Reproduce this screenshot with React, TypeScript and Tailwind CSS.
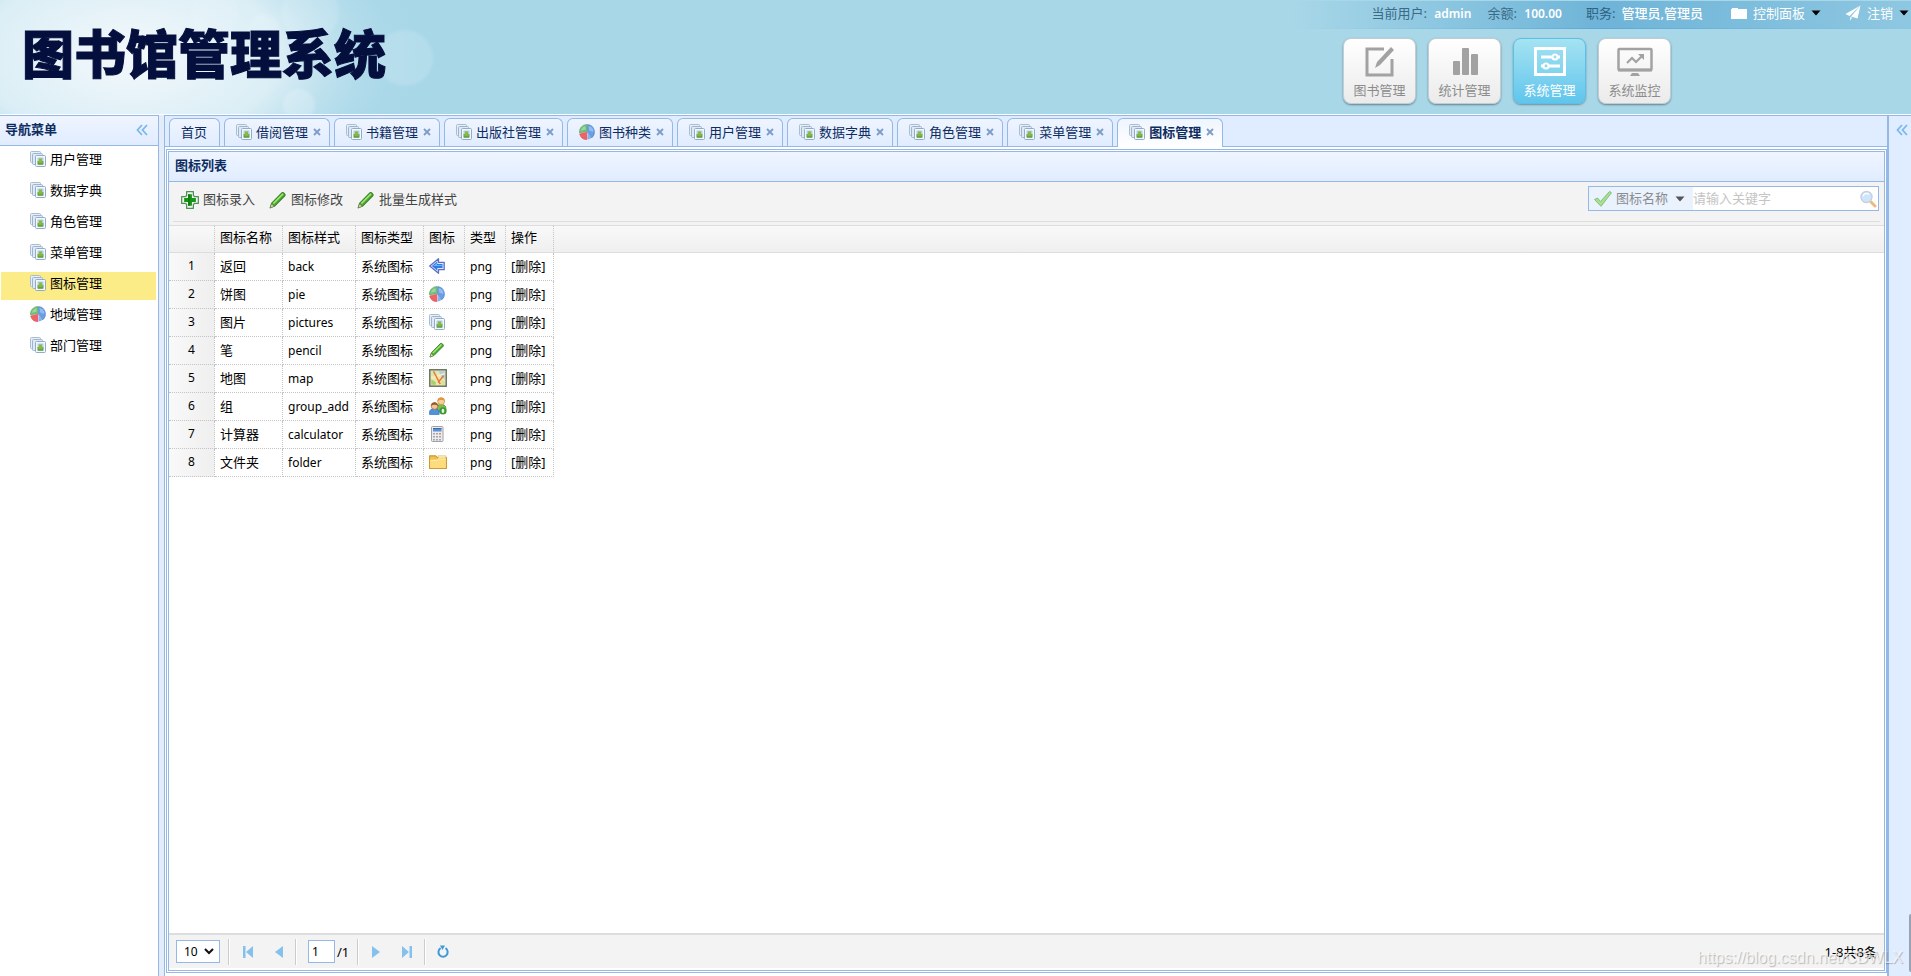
import React, { useState } from 'react';

type IconName = 'pictures' | 'pie' | 'back' | 'pencil' | 'map' | 'group' | 'calculator' | 'folder' | 'add';

const Icon = ({ name, size = 16 }: { name: IconName; size?: number }) => {
  const drawings: Record<IconName, React.ReactNode> = {
    pictures: (
      <>
        <rect x="0.5" y="0.5" width="10" height="11" rx="1" fill="#e6eef6" stroke="#a9bdd4" />
        <rect x="2.5" y="2.5" width="10" height="11" rx="1" fill="#dfe9f3" stroke="#9fb5cf" />
        <rect x="5.5" y="4.5" width="10" height="11" rx="1" fill="#f4f7fb" stroke="#93abc8" />
        <rect x="7.5" y="6.5" width="6" height="7" fill="#a9cdea" />
        <rect x="7.5" y="10" width="6" height="3.500" fill="#76b04a" />
        <rect x="9" y="7.5" width="3" height="4" fill="#8fb93a" />
        <path d="M8 13h5" stroke="#5b9440" strokeWidth="1" />
      </>
    ),
    pie: (
      <>
        <path d="M8.6 0.600A7.500 7.500 0 0 1 12.600 14L8.200 7.800z" fill="#6a9fe2" stroke="#4f82cb" strokeWidth="0.600" />
        <path d="M9.600 2A6 6 0 0 1 14.400 8L10.200 6.500z" fill="#93bcf0" />
        <path d="M7.800 7.400L8 0.500A7.400 7.400 0 0 0 0.500 9z" fill="#76c07c" stroke="#58a562" strokeWidth="0.600" />
        <path d="M6.600 2.200A5.600 5.600 0 0 0 2 6.800L6.600 5.400z" fill="#9ad79a" />
        <path d="M7.800 8.200L0.700 10A7.300 7.300 0 0 0 8 15.600z" fill="#f06266" stroke="#dd4f54" strokeWidth="0.600" />
        <path d="M8.600 8.800v6.700a7 7 0 0 0 3.800-1.500z" fill="#86b3eb" />
      </>
    ),
    back: (
      <>
        <path d="M9.500 0.700v3.600h5.700v7.400H9.500v3.600L0.700 8z" fill="#dfe9fb" stroke="#5d6fc4" strokeWidth="1.300" strokeLinejoin="round" />
        <path d="M8.300 3.600v2.400h5.200v4H8.300v2.400L2.800 8z" fill="#2b7de4" />
        <path d="M8 5v2h5v1H4z" fill="#6cb0f7" />
      </>
    ),
    pencil: (
      <>
        <path d="M1 15l1.400-4.200L11.400 1.600c1-1 3.800 1.400 2.800 2.600L5 13.400z" fill="#4caf2c" stroke="#3a7d2b" strokeWidth="0.900" strokeLinejoin="round" />
        <path d="M3.400 10.600l8.600-8.600 1 0.900-8.600 8.700z" fill="#a3e67a" />
        <path d="M1 15l1.200-3.600 2.300 2.300z" fill="#e9dcaa" stroke="#5a6a4a" strokeWidth="0.500" />
      </>
    ),
    map: (
      <>
        <rect x="0.700" y="0.700" width="14.600" height="14.600" fill="#ece6b0" stroke="#66735f" strokeWidth="1.300" />
        <rect x="2" y="2" width="5" height="4" fill="#d5e6b0" />
        <path d="M8.500 2H14v7l-3-2z" fill="#a8ccef" />
        <path d="M2 9l4 2.500V14H2z" fill="#a6cf6e" />
        <path d="M11 9l3 2v3h-3z" fill="#d5e39a" />
        <path d="M2 8l12-4" stroke="#f7efb0" strokeWidth="1.200" />
        <path d="M4 2l6 11.500M13 6L8 12" stroke="#e8793a" strokeWidth="1.300" fill="none" />
      </>
    ),
    group: (
      <>
        <path d="M7 13V9.500c0-2 1.500-3 3.500-3s4.500 1 4.500 3V13z" fill="#7dbb4c" stroke="#4d8730" strokeWidth="0.600" />
        <circle cx="10.800" cy="3.700" r="3.100" fill="#f5cf9f" stroke="#c98b3a" strokeWidth="0.600" />
        <path d="M7.500 3.800c0-4.600 6.600-4.600 6.600 0-1.500-1.600-4.700-1.600-6.600 0z" fill="#e3973a" />
        <path d="M0.500 15.500v-2c0-2 1.600-3 4.200-3s4.300 1 4.300 3v2z" fill="#4f94e0" stroke="#2f6cb8" strokeWidth="0.600" />
        <circle cx="4.900" cy="8" r="3" fill="#f2c394" stroke="#a9642c" strokeWidth="0.600" />
        <path d="M1.800 8c0-4.300 6.200-4.300 6.200 0-1.500-1.500-4.500-1.500-6.200 0z" fill="#8f5a30" />
        <circle cx="12.400" cy="12.400" r="3.200" fill="#3f9a35" />
        <ellipse cx="12.400" cy="12.400" rx="1.200" ry="1.900" fill="#e9f6e4" />
      </>
    ),
    calculator: (
      <>
        <rect x="2.500" y="0.500" width="11.500" height="15" rx="1" fill="#ececee" stroke="#a2a2a6" />
        <rect x="4" y="2" width="8.500" height="3.500" fill="#5b8fd6" />
        <rect x="4" y="2" width="8.500" height="1" fill="#3c6bab" />
        {[7, 10, 13].map((y) => (
          <g key={y} fill="#a3a6ac">
            <rect x="4" y={y} width="2" height="1.500" />
            <rect x="7" y={y} width="2" height="1.500" />
            <rect x="10" y={y} width="2" height="1.500" fill={y === 7 ? '#d98a52' : '#a3a6ac'} />
          </g>
        ))}
      </>
    ),
    folder: (
      <>
        <path d="M0.500 13.800V2.500h5.500l1.200 1.500h8.300v9.800z" fill="#f0c050" stroke="#cf9a35" strokeLinejoin="round" />
        <path d="M8 2.500h7v2H8z" fill="#fff3c4" stroke="#d6a748" strokeWidth="0.500" />
        <path d="M1 13.300V6h6l1.500-1.200H15v8.500z" fill="#fcdc7c" />
        <path d="M1.300 6.500h6L8.600 5.400H14.700" stroke="#fff0b8" fill="none" strokeWidth="0.800" />
      </>
    ),
    add: (
      <>
        <path d="M5 0.600h6v3.400l1 1h3.400v6H12l-1 1v3.400H5V12l-1-1H0.600V5H4l1-1z" fill="#eef7ee" stroke="#4d8f57" strokeWidth="1.100" strokeLinejoin="round" />
        <path d="M6.300 2.800h3.400v3.500h3.500v3.400H9.700v3.500H6.300V9.700H2.800V6.300h3.500z" fill="#179317" />
        <path d="M6.300 2.800h1.500v10.400H6.300z" fill="#0f7a12" />
      </>
    ),
  };
  return (
    <svg width={size} height={size} viewBox="0 0 16 16" className="shrink-0" aria-hidden="true">
      {drawings[name]}
    </svg>
  );
};

const Caret = ({ className }: { className?: string }) => (
  <svg width="10" height="6" viewBox="0 0 10 6" className={className} aria-hidden="true">
    <path d="M0.500 0.500h9L5 5.500z" fill="currentColor" />
  </svg>
);

const DoubleChevron = () => (
  <svg width="12" height="12" viewBox="0 0 12 12" fill="none" stroke="#7ab8f0" strokeWidth="1.800" aria-hidden="true">
    <path d="M6 1L1.500 6 6 11M11 1L6.500 6 11 11" />
  </svg>
);

const menus: { label: string; icon: IconName }[] = [
  { label: '用户管理', icon: 'pictures' },
  { label: '数据字典', icon: 'pictures' },
  { label: '角色管理', icon: 'pictures' },
  { label: '菜单管理', icon: 'pictures' },
  { label: '图标管理', icon: 'pictures' },
  { label: '地域管理', icon: 'pie' },
  { label: '部门管理', icon: 'pictures' },
];

const tabs: { label: string; icon?: IconName }[] = [
  { label: '首页' },
  { label: '借阅管理', icon: 'pictures' },
  { label: '书籍管理', icon: 'pictures' },
  { label: '出版社管理', icon: 'pictures' },
  { label: '图书种类', icon: 'pie' },
  { label: '用户管理', icon: 'pictures' },
  { label: '数据字典', icon: 'pictures' },
  { label: '角色管理', icon: 'pictures' },
  { label: '菜单管理', icon: 'pictures' },
  { label: '图标管理', icon: 'pictures' },
];

const rows: { name: string; style: string; icon: IconName; size: number }[] = [
  { name: '返回', style: 'back', icon: 'back', size: 16 },
  { name: '饼图', style: 'pie', icon: 'pie', size: 16 },
  { name: '图片', style: 'pictures', icon: 'pictures', size: 16 },
  { name: '笔', style: 'pencil', icon: 'pencil', size: 16 },
  { name: '地图', style: 'map', icon: 'map', size: 18 },
  { name: '组', style: 'group_add', icon: 'group', size: 18 },
  { name: '计算器', style: 'calculator', icon: 'calculator', size: 16 },
  { name: '文件夹', style: 'folder', icon: 'folder', size: 18 },
];

const modules = [
  {
    label: '图书管理',
    drawing: (
      <>
        <path d="M20 3H3v26h25V13" fill="none" stroke="currentColor" strokeWidth="3" />
        <path d="M27 1l3 3-14 15-5 3 2-6z" fill="currentColor" />
      </>
    ),
  },
  {
    label: '统计管理',
    drawing: (
      <g fill="currentColor">
        <rect x="4" y="15" width="7" height="14" rx="1" />
        <rect x="13" y="2" width="7" height="27" rx="1" />
        <rect x="22" y="8" width="7" height="21" rx="1" />
      </g>
    ),
  },
  {
    label: '系统管理',
    drawing: (
      <g fill="none" stroke="currentColor">
        <rect x="1.500" y="2.500" width="29" height="26" strokeWidth="3" />
        <path d="M7 11h11M24 11h2M7 20h2M15 20h11" strokeWidth="3" />
        <circle cx="21" cy="11" r="2.500" strokeWidth="2.200" />
        <circle cx="12" cy="20" r="2.500" strokeWidth="2.200" />
      </g>
    ),
  },
  {
    label: '系统监控',
    drawing: (
      <>
        <rect x="-0.500" y="3" width="33" height="21" rx="1" fill="none" stroke="currentColor" strokeWidth="2.500" />
        <path d="M-1 22.500h34v3H-1z" fill="currentColor" />
        <path d="M8 17l5-5 4 4 6-6" fill="none" stroke="currentColor" strokeWidth="2.200" />
        <path d="M19 8h6v6z" fill="currentColor" />
        <path d="M13 27h6l2 3H11z" fill="currentColor" />
      </>
    ),
  },
];

const Header = () => (
  <header className="relative h-[114px] shrink-0 overflow-hidden bg-[#a8d7e8]">
    <svg className="absolute inset-0" width="480" height="114" viewBox="0 0 480 114" aria-hidden="true">
      <defs>
        <radialGradient id="glow">
          <stop offset="0" stopColor="#f4f9fc" />
          <stop offset="0.500" stopColor="#e4f2f8" stopOpacity="0.850" />
          <stop offset="1" stopColor="#a8d7e8" stopOpacity="0" />
        </radialGradient>
        <filter id="soft">
          <feGaussianBlur stdDeviation="1.500" />
        </filter>
      </defs>
      <ellipse cx="130" cy="55" rx="300" ry="170" fill="url(#glow)" />
      <g fill="#fff" filter="url(#soft)">
        <circle cx="405" cy="58" r="28" fillOpacity="0.140" />
        <circle cx="310" cy="12" r="29" fillOpacity="0.120" />
        <circle cx="299" cy="105" r="16" fillOpacity="0.200" />
        <circle cx="264" cy="30" r="16" fillOpacity="0.120" />
        <circle cx="215" cy="14" r="24" fillOpacity="0.080" />
      </g>
    </svg>

    <div className="relative flex justify-between">
      <h1 className="pt-[22px] pl-[22px] font-['Noto_Sans_CJK_SC',sans-serif] text-[52px] leading-[60px] font-black text-[#040f3e] [-webkit-text-stroke:1px_#040f3e]">
        图书馆管理系统
      </h1>

      <div className="flex flex-col">
        <div className="mt-px flex h-[27px] items-center bg-linear-to-r from-transparent via-[#6eb4d8] to-[#8ec7e1] pr-[2px] pb-[3px] pl-20 leading-5 text-white">
          <span>
            <span className="mr-1 text-[#3a6a86]">当前用户:</span> <b className="text-xs font-semibold">admin</b>
          </span>
          <span className="ml-4">
            <span className="mr-1 text-[#3a6a86]">余额:</span> <b className="text-xs font-semibold">100.00</b>
          </span>
          <span className="ml-6">
            <span className="mr-[6px] text-[#2f6180]">职务:</span>
            <b className="font-medium">管理员,管理员</b>
          </span>
          <button type="button" className="ml-7 flex items-center gap-[6px]">
            <svg width="16" height="12" viewBox="0 0 16 12" aria-hidden="true">
              <path d="M1 2V1h6v1h9v10H0V2z" fill="#fff" />
            </svg>
            控制面板
            <Caret className="text-black" />
          </button>
          <button type="button" className="ml-6 flex items-center gap-[6px]">
            <svg width="16" height="16" viewBox="0 0 16 16" aria-hidden="true">
              <path d="M15.500 0.500L0.500 9l4 2z" fill="#fff" />
              <path d="M15.500 0.500L6 11.500l6.500 2z" fill="#fff" />
              <path d="M5 11.800v4l2.200-3z" fill="#e6f3fa" />
            </svg>
            注销
            <Caret className="text-black" />
          </button>
        </div>
        <div className="h-px bg-linear-to-r from-transparent via-[#5aa8d6] to-[#8ec7e1]" />

        <nav className="mt-[9px] mr-60 flex justify-end gap-3">
          {modules.map((m) => {
            const active = m.label === '系统管理';
            return (
              <button
                key={m.label}
                type="button"
                className={
                  active
                    ? 'flex h-[66px] w-[73px] flex-col items-center rounded-lg border border-[#5dbfe6] bg-linear-to-b from-[#a4e3f2] to-[#5fc5ec] pt-[7px] text-white shadow-[0_1px_2px_rgba(0,0,0,0.35)]'
                    : 'flex h-[66px] w-[73px] flex-col items-center rounded-lg border border-[#c2cdd2] bg-linear-to-b from-white to-[#ebebeb] pt-[7px] text-[#8c8c8c] shadow-[0_1px_2px_rgba(0,0,0,0.4)]'
                }
              >
                <svg
                  width="32"
                  height="30"
                  viewBox="0 0 32 30"
                  className={active ? 'overflow-visible text-white' : 'overflow-visible text-[#a2a2a2]'}
                  aria-hidden="true"
                >
                  {m.drawing}
                </svg>
                <span className="mt-[6px] leading-4">{m.label}</span>
              </button>
            );
          })}
        </nav>
      </div>
    </div>
  </header>
);

const Sidebar = () => (
  <aside className="flex w-[159px] shrink-0 flex-col border-t border-r border-[#95b8e7] bg-white">
    <div className="flex h-[30px] items-center justify-between border-b border-[#95b8e7] bg-linear-to-b from-[#eff5ff] to-[#e0ecff] pr-[10px] pb-[2px] pl-[5px]">
      <h2 className="font-bold text-[#0e2d5f]">导航菜单</h2>
      <button type="button" aria-label="收起">
        <DoubleChevron />
      </button>
    </div>
    <ul className="flex flex-col gap-[3px] pt-[2px] pr-[2px] pl-px">
      {menus.map((m) => (
        <li key={m.label}>
          <a
            href="#"
            className={
              m.label === '图标管理'
                ? 'flex h-7 items-start gap-1 bg-[#fbec88] pt-[3px] pl-[29px] leading-4'
                : 'flex h-7 items-start gap-1 pt-[3px] pl-[29px] leading-4'
            }
          >
            <Icon name={m.icon} />
            {m.label}
          </a>
        </li>
      ))}
    </ul>
  </aside>
);

const Tabs = () => (
  <div className="flex h-8 shrink-0 gap-1 border-t border-b border-[#95b8e7] bg-[#e0ecff] pt-[2px] pl-1 text-[#0e2d5f]">
    {tabs.map((t) => {
      const active = t.label === '图标管理';
      return (
        <div
          key={t.label}
          className={
            active
              ? 'relative flex h-[29px] items-center rounded-t-md border border-b-0 border-[#95b8e7] bg-linear-to-b from-[#eff5ff] to-white pr-2 pb-[3px] pl-[11px] font-bold'
              : 'flex h-7 items-center rounded-t-md border border-b-0 border-[#95b8e7] bg-linear-to-b from-[#eff5ff] to-[#e0ecff] pr-2 pb-[2px] pl-[11px]'
          }
        >
          <button type="button" className="flex items-center gap-1 leading-5">
            {t.icon && <Icon name={t.icon} />}
            {t.label}
          </button>
          {t.icon ? (
            <button type="button" aria-label="关闭" className="ml-[5px]">
              <svg width="8" height="8" viewBox="0 0 8 8" stroke="#7c9cc9" strokeWidth="1.800" aria-hidden="true">
                <path d="M1 1l6 6M7 1L1 7" />
              </svg>
            </button>
          ) : (
            <span className="w-1" />
          )}
        </div>
      );
    })}
  </div>
);

const Toolbar = () => (
  <div className="shrink-0 bg-[#f3f3f3] pb-[3px]">
    <div className="mx-1 flex h-10 items-start justify-between border-b border-[#dddddd] pt-1 pr-px pl-2">
      <div className="flex h-7 items-center gap-[14px] text-[#444]">
        <button type="button" className="flex items-center gap-1">
          <Icon name="add" size={18} />
          图标录入
        </button>
        <button type="button" className="flex items-center gap-1">
          <Icon name="pencil" size={18} />
          图标修改
        </button>
        <button type="button" className="flex items-center gap-1">
          <Icon name="pencil" size={18} />
          批量生成样式
        </button>
      </div>

      <form className="flex h-[25px] w-[291px] items-center border border-[#95b8e7] bg-white pr-px">
        <label className="relative flex h-full w-[104px] items-center gap-1 bg-[#eaf2fe] pl-[5px]">
          <svg width="18" height="16" viewBox="0 0 18 16" className="shrink-0" aria-hidden="true">
            <path d="M0.500 8.500l3-1.500 3 3.500L15.500 0.500l2 1.200L7 15.300z" fill="#a9e08e" stroke="#7fc17a" strokeLinejoin="round" />
          </svg>
          <select aria-label="查询字段" className="w-full appearance-none bg-transparent text-[#8a8c8f] outline-none">
            <option>图标名称</option>
          </select>
          <Caret className="pointer-events-none absolute right-2 text-[#555]" />
        </label>
        <input type="text" aria-label="关键字" placeholder="请输入关键字" className="min-w-0 flex-1 outline-none placeholder:text-[#c4c4c4]" />
        <button type="button" aria-label="搜索">
          <svg width="18" height="18" viewBox="0 0 18 18" aria-hidden="true">
            <path d="M12 12l4 4" stroke="#efb97c" strokeWidth="3" strokeLinecap="round" />
            <circle cx="7.500" cy="7" r="5.500" fill="#cfe6fa" stroke="#c3d0e0" strokeWidth="1.400" />
            <path d="M4 6.500a3.500 3.500 0 0 1 6-2" stroke="#fff" strokeWidth="1.200" fill="none" />
          </svg>
        </button>
      </form>
    </div>
  </div>
);

const DataGrid = () => {
  const head = 'border-t border-b border-r border-[#dddddd] [border-right-style:dotted] [border-right-color:#c4c4c4] px-[5px] font-normal pb-1';
  const cell = 'border-r border-b border-dotted border-[#c4c4c4] px-[5px]';
  return (
    <div className="min-h-0 flex-1 overflow-auto bg-white">
      <table className="w-full table-fixed border-separate border-spacing-0 text-left leading-5 text-black">
        <colgroup>
          <col className="w-[46px]" />
          <col className="w-[68px]" />
          <col className="w-[73px]" />
          <col className="w-[68px]" />
          <col className="w-[41px]" />
          <col className="w-[41px]" />
          <col className="w-[48px]" />
          <col />
        </colgroup>
        <thead>
          <tr className="h-7 bg-linear-to-b from-[#f9f9f9] to-[#efefef]">
            <th className={head} />
            <th className={head}>图标名称</th>
            <th className={head}>图标样式</th>
            <th className={head}>图标类型</th>
            <th className={head}>图标</th>
            <th className={head}>类型</th>
            <th className={head}>操作</th>
            <th className="border-t border-b border-[#dddddd]" />
          </tr>
        </thead>
        <tbody>
          {rows.map((r, i) => (
            <tr key={r.style} className="h-7">
              <td className="border-r border-b border-dotted border-[#c4c4c4] bg-linear-to-r from-[#f9f9f9] to-[#efefef] pb-[2px] text-center text-xs">
                {i + 1}
              </td>
              <td className={`${cell} pb-[2px]`}>{r.name}</td>
              <td className={`${cell} text-xs`}>{r.style}</td>
              <td className={`${cell} pb-[2px]`}>系统图标</td>
              <td className={`${cell} pb-[2px]`}>
                <Icon name={r.icon} size={r.size} />
              </td>
              <td className={`${cell} text-xs`}>png</td>
              <td className={`${cell} pb-[2px]`}>
                <a href="#">[删除]</a>
              </td>
              <td />
            </tr>
          ))}
        </tbody>
      </table>
    </div>
  );
};

const Separator = () => <span className="h-[26px] w-[2px] border-l border-[#ccc] bg-white" />;

const Pagination = () => {
  const [page, setPage] = useState('1');
  return (
    <div className="mb-[2px] flex h-[35px] shrink-0 items-center border-t-2 border-[#dddddd] bg-[#f3f3f3] pr-[7px] pl-[7px] text-black">
      <label className="relative flex items-center">
        <select aria-label="每页条数" className="h-[23px] w-11 appearance-none border border-[#95b8e7] bg-white pl-[7px] text-xs leading-5 outline-none">
          <option>10</option>
          <option>20</option>
          <option>50</option>
        </select>
        <svg width="10" height="7" viewBox="0 0 10 7" className="pointer-events-none absolute right-[6px]" aria-hidden="true">
          <path d="M1 1l4 4 4-4" fill="none" stroke="#111" strokeWidth="2" />
        </svg>
      </label>
      <span className="ml-2 flex">
        <Separator />
      </span>
      <button type="button" aria-label="首页" className="ml-[13px]">
        <svg width="10" height="12" viewBox="0 0 10 12" fill="#84c1ec" aria-hidden="true">
          <path d="M0 0h2.500v12H0zM10 0v12L3 6z" />
        </svg>
      </button>
      <button type="button" aria-label="上一页" className="ml-[22px]">
        <svg width="8" height="12" viewBox="0 0 8 12" fill="#84c1ec" aria-hidden="true">
          <path d="M8 0v12L0 6z" />
        </svg>
      </button>
      <span className="ml-3 flex">
        <Separator />
      </span>
      <input
        type="text"
        aria-label="页码"
        value={page}
        onChange={(e) => setPage(e.target.value)}
        className="ml-[11px] h-[23px] w-[27px] border border-[#95b8e7] bg-white pl-[3px] text-xs leading-5 outline-none"
      />
      <span className="ml-[2px] leading-5">/1</span>
      <span className="ml-2 flex">
        <Separator />
      </span>
      <button type="button" aria-label="下一页" className="ml-[13px]">
        <svg width="8" height="12" viewBox="0 0 8 12" fill="#84c1ec" aria-hidden="true">
          <path d="M0 0v12l8-6z" />
        </svg>
      </button>
      <button type="button" aria-label="末页" className="ml-[22px]">
        <svg width="10" height="12" viewBox="0 0 10 12" fill="#84c1ec" aria-hidden="true">
          <path d="M7.500 0H10v12H7.500zM0 0v12l7-6z" />
        </svg>
      </button>
      <span className="ml-3 flex">
        <Separator />
      </span>
      <button type="button" aria-label="刷新" className="ml-[10px]">
        <svg width="14" height="14" viewBox="0 0 14 14" aria-hidden="true">
          <path d="M9.500 3.200A4.600 4.600 0 1 1 4.600 3.200" fill="none" stroke="#3f9bd8" strokeWidth="2" />
          <path d="M4 0.500h5L6.500 5z" fill="#3f9bd8" />
        </svg>
      </button>
      <span className="ml-auto leading-5">1-8共8条</span>
    </div>
  );
};

const App: React.FC = () => (
  <div className="relative flex h-screen flex-col overflow-hidden bg-white font-['Noto_Sans','Noto_Sans_CJK_SC',sans-serif] text-[13px] text-black">
    <Header />
    <div className="mt-px flex min-h-0 flex-1 bg-[#e3edfa]">
      <Sidebar />
      <main className="ml-[5px] flex min-w-0 flex-1 flex-col border-l border-[#95b8e7] bg-white">
        <Tabs />
        <div className="mt-[2px] mb-[3px] ml-px flex min-h-0 flex-1 border border-[#95b8e7] p-px">
          <section className="flex min-w-0 flex-1 flex-col border border-[#95b8e7]">
            <h2 className="flex h-[30px] shrink-0 items-center border-b border-[#95b8e7] bg-linear-to-b from-[#eff5ff] to-[#e0ecff] pb-px pl-[6px] font-bold text-[#0e2d5f]">
              图标列表
            </h2>
            <Toolbar />
            <DataGrid />
            <Pagination />
          </section>
        </div>
      </main>
      <aside className="relative flex w-6 shrink-0 items-start justify-end border-t border-l-2 border-[#95b8e7] bg-[#e0ecff] pt-2 pr-[3px]">
        <button type="button" aria-label="展开">
          <DoubleChevron />
        </button>
        <span className="absolute right-0 bottom-1 h-[58px] w-[2px] rounded-l bg-[#9aa3b3]" />
      </aside>
    </div>
    <span className="pointer-events-none absolute right-2 bottom-[6px] font-['Liberation_Sans',sans-serif] text-base leading-6 text-white/70 [text-shadow:1px_1px_1px_rgba(0,0,0,0.25)]">
      https://blog.csdn.net/CDWLX
    </span>
  </div>
);

export default App;
